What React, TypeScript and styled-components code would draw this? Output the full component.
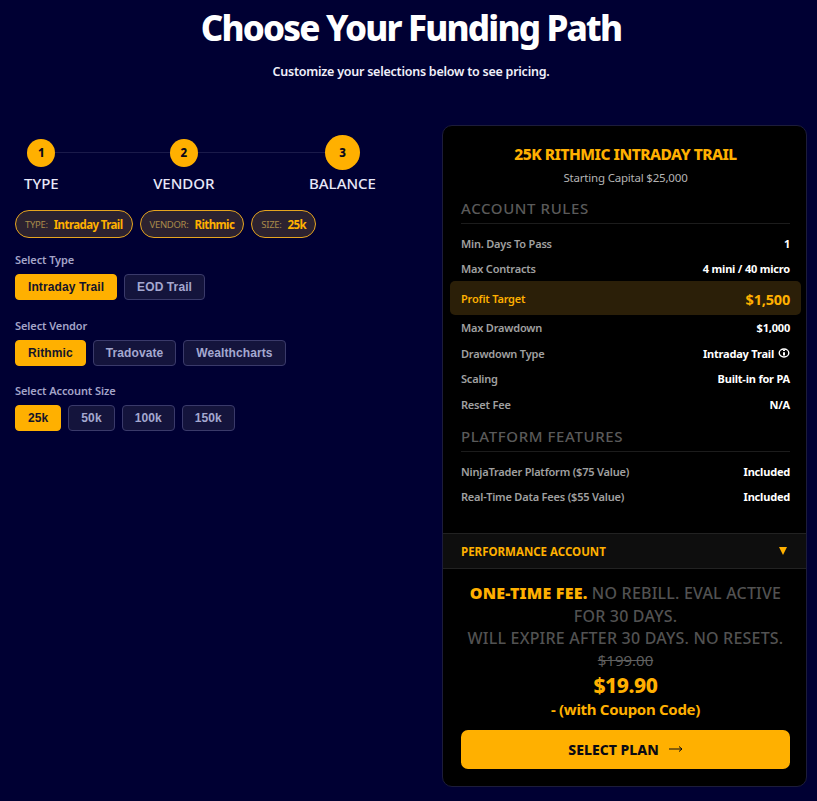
import React from 'react'
import styled, { createGlobalStyle } from 'styled-components'

const GlobalStyle = createGlobalStyle`
  html, body {
    margin: 0;
    padding: 0;
    background: #000033;
  }
  * {
    box-sizing: border-box;
  }
`

const Page = styled.div`
  width: 817px;
  height: 801px;
  overflow: hidden;
  background: #000033;
  color: #fff;
  font-family: 'Noto Sans', 'Open Sans', sans-serif;
`

const Header = styled.header`
  text-align: center;
  padding: 3px 0 0 5px;
  height: 125px;
`

const Title = styled.h1`
  margin: 0;
  font-size: 35px;
  line-height: 49px;
  font-weight: 800;
  letter-spacing: -1.8px;
`

const Subtitle = styled.p`
  margin: 11px 0 0;
  font-size: 12.5px;
  line-height: 18px;
  font-weight: 600;
  letter-spacing: -0.24px;
  color: #f0f0fa;
`

const Columns = styled.div`
  display: flex;
  justify-content: space-between;
  padding: 0 10px 0 15px;
`

const Left = styled.div`
  width: 370px;
`

const Steps = styled.div`
  position: relative;
  display: flex;
  justify-content: space-between;
  padding: 10px 9px 0;
  height: 70px;
`

const StepLine = styled.div`
  position: absolute;
  left: 40px;
  right: 60px;
  top: 27px;
  height: 1px;
  background: #1a1a4a;
`

const Step = styled.div`
  position: relative;
  display: flex;
  flex-direction: column;
  align-items: center;
`

const StepCircleSlot = styled.div`
  height: 35px;
  display: flex;
  align-items: center;
`

const StepCircle = styled.div<{ $active?: boolean }>`
  width: ${(p) => (p.$active ? 35 : 28)}px;
  height: ${(p) => (p.$active ? 35 : 28)}px;
  border-radius: 50%;
  background: #ffb000;
  color: #0a0a1a;
  font-size: 11.5px;
  font-weight: 800;
  display: flex;
  align-items: center;
  justify-content: center;
`

const StepLabel = styled.div`
  margin-top: 4px;
  font-size: 15px;
  line-height: 19px;
  font-weight: 500;
  color: #e8e8f8;
`

const Chips = styled.div`
  display: flex;
  gap: 7px;
  margin-top: 15px;
`

const Chip = styled.div`
  height: 28px;
  padding: 0 9px;
  display: flex;
  align-items: center;
  gap: 6px;
  border: 1px solid #e6a520;
  border-radius: 15px;
  background: #2c2230;
`

const ChipKey = styled.span`
  font-size: 9.5px;
  color: #a98a4a;
  letter-spacing: -0.3px;
`

const ChipValue = styled.span`
  font-size: 11.5px;
  font-weight: 700;
  color: #ffb000;
  letter-spacing: -0.6px;
`

const Group = styled.section`
  margin-top: 14px;
  & + & {
    margin-top: 17.5px;
  }
`

const GroupLabel = styled.div`
  font-size: 11px;
  line-height: 15px;
  font-weight: 600;
  color: #a4a4c8;
  letter-spacing: -0.1px;
  margin-bottom: 7px;
`

const Options = styled.div`
  display: flex;
  gap: 7px;
`

const Option = styled.button<{ $selected?: boolean }>`
  height: 26px;
  padding: 0 12px;
  border-radius: 4px;
  font-family: 'Liberation Sans', Arial, sans-serif;
  font-size: 12px;
  font-weight: 700;
  letter-spacing: 0.1px;
  border: 1px solid ${(p) => (p.$selected ? '#ffb000' : '#3a3a6a')};
  background: ${(p) => (p.$selected ? '#ffb000' : '#14143c')};
  color: ${(p) => (p.$selected ? '#14142a' : '#a4a8d0')};
`

const Card = styled.aside`
  width: 365px;
  height: 662px;
  background: #000;
  border: 1px solid #1c1c3a;
  border-radius: 10px;
  overflow: hidden;
  display: flex;
  flex-direction: column;
`

const CardBody = styled.div`
  padding: 18px 16px 0 18px;
  height: 407px;
`

const PlanTitle = styled.h2`
  margin: 0;
  text-align: center;
  font-size: 15.5px;
  line-height: 20px;
  font-weight: 800;
  letter-spacing: -0.5px;
  color: #ffb000;
`

const PlanSub = styled.div`
  text-align: center;
  margin-top: 6px;
  font-size: 11.5px;
  line-height: 15px;
  color: #b4b4b4;
  letter-spacing: -0.2px;
`

const SectionTitle = styled.h3`
  margin: 0;
  padding-bottom: 5px;
  font-size: 15px;
  line-height: 19px;
  font-weight: 500;
  letter-spacing: 0.6px;
  color: #5a5a5a;
  border-bottom: 1px solid #1c1c1c;
`

const RulesHead = styled(SectionTitle)`
  margin-top: 14px;
`

const FeaturesHead = styled(SectionTitle)`
  margin-top: 11px;
`

const Rows = styled.div`
  margin-top: 6px;
`

const Row = styled.div`
  display: flex;
  justify-content: space-between;
  align-items: center;
  height: 25.4px;
  padding-top: 1px;
`

const HighlightRow = styled(Row)`
  height: 34px;
  margin: 0 -11px;
  padding: 2px 11px 0;
  border-radius: 5px;
  background: #2b1f08;
`

const RowKey = styled.span`
  font-size: 11px;
  font-weight: 600;
  color: #a0a0a0;
  letter-spacing: -0.2px;
`

const RowValue = styled.span`
  display: flex;
  align-items: center;
  gap: 4px;
  font-size: 11px;
  font-weight: 700;
  color: #fff;
  letter-spacing: -0.2px;
`

const TargetKey = styled(RowKey)`
  color: #ffb000;
`

const TargetValue = styled.span`
  font-size: 14.5px;
  font-weight: 700;
  color: #ffb000;
  letter-spacing: -0.2px;
`

const Accordion = styled.div`
  height: 36px;
  padding: 0 19px 0 18px;
  display: flex;
  align-items: center;
  justify-content: space-between;
  background: #0e0e0e;
  border-top: 1px solid #222;
  border-bottom: 1px solid #222;
`

const AccordionLabel = styled.span`
  font-size: 11.5px;
  font-weight: 700;
  color: #ffb000;
`

const Footer = styled.div`
  padding: 13px 16px 0 18px;
  text-align: center;
`

const Notice = styled.p`
  margin: 0;
  font-size: 16px;
  line-height: 22.5px;
  font-weight: 500;
  letter-spacing: 0.2px;
  color: #525252;
`

const NoticeStrong = styled.strong`
  font-weight: 900;
  color: #ffb000;
`

const OldPrice = styled.div`
  margin-top: 1px;
  font-size: 15px;
  line-height: 18px;
  color: #5f5f5f;
  text-decoration: line-through;
`

const Price = styled.div`
  margin-top: 3px;
  font-size: 21px;
  line-height: 27px;
  font-weight: 800;
  letter-spacing: -0.4px;
  color: #ffb000;
`

const Coupon = styled.div`
  margin-top: 1px;
  font-size: 15px;
  line-height: 19px;
  font-weight: 700;
  letter-spacing: -0.3px;
  color: #ffb000;
`

const SelectButton = styled.button`
  width: 100%;
  height: 39px;
  margin-top: 11px;
  border: none;
  border-radius: 7px;
  background: #ffb000;
  color: #0a0a14;
  font-family: inherit;
  font-size: 14px;
  font-weight: 800;
  display: flex;
  align-items: center;
  justify-content: center;
  gap: 10px;
`

const InfoIcon = () => (
  <svg width="12" height="10" viewBox="0 0 12 10" fill="none" stroke="#fff">
    <ellipse cx="6" cy="5" rx="4.8" ry="4" strokeWidth="1.4" />
    <path d="M6 4.2v3.4M6 1.8v1.3" strokeWidth="2" />
  </svg>
)

const ArrowIcon = () => (
  <svg width="14" height="8" viewBox="0 0 14 8" fill="none" stroke="#0a0a14" strokeWidth="1">
    <path d="M0 4h13M10 1.5 13 4l-3 2.5" />
  </svg>
)

const TriangleIcon = () => (
  <svg width="8" height="8" viewBox="0 0 8 8" fill="#ffb000">
    <path d="M0 0h8L4 8z" />
  </svg>
)

const steps = [
  { n: 1, label: 'TYPE' },
  { n: 2, label: 'VENDOR' },
  { n: 3, label: 'BALANCE', active: true },
]

const chips = [
  { key: 'TYPE:', value: 'Intraday Trail' },
  { key: 'VENDOR:', value: 'Rithmic' },
  { key: 'SIZE:', value: '25k' },
]

const groups = [
  { label: 'Select Type', options: ['Intraday Trail', 'EOD Trail'] },
  { label: 'Select Vendor', options: ['Rithmic', 'Tradovate', 'Wealthcharts'] },
  { label: 'Select Account Size', options: ['25k', '50k', '100k', '150k'] },
]

const App = () => (
  <Page>
    <GlobalStyle />
    <Header>
      <Title>Choose Your Funding Path</Title>
      <Subtitle>Customize your selections below to see pricing.</Subtitle>
    </Header>
    <Columns>
      <Left>
        <Steps>
          <StepLine />
          {steps.map((s) => (
            <Step key={s.n}>
              <StepCircleSlot>
                <StepCircle $active={s.active}>{s.n}</StepCircle>
              </StepCircleSlot>
              <StepLabel>{s.label}</StepLabel>
            </Step>
          ))}
        </Steps>
        <Chips>
          {chips.map((c) => (
            <Chip key={c.key}>
              <ChipKey>{c.key}</ChipKey>
              <ChipValue>{c.value}</ChipValue>
            </Chip>
          ))}
        </Chips>
        {groups.map((g) => (
          <Group key={g.label}>
            <GroupLabel>{g.label}</GroupLabel>
            <Options>
              {g.options.map((o, i) => (
                <Option key={o} $selected={i === 0}>
                  {o}
                </Option>
              ))}
            </Options>
          </Group>
        ))}
      </Left>
      <Card>
        <CardBody>
          <PlanTitle>25K RITHMIC INTRADAY TRAIL</PlanTitle>
          <PlanSub>Starting Capital $25,000</PlanSub>
          <RulesHead>ACCOUNT RULES</RulesHead>
          <Rows>
            <Row>
              <RowKey>Min. Days To Pass</RowKey>
              <RowValue>1</RowValue>
            </Row>
            <Row>
              <RowKey>Max Contracts</RowKey>
              <RowValue>4 mini / 40 micro</RowValue>
            </Row>
            <HighlightRow>
              <TargetKey>Profit Target</TargetKey>
              <TargetValue>$1,500</TargetValue>
            </HighlightRow>
            <Row>
              <RowKey>Max Drawdown</RowKey>
              <RowValue>$1,000</RowValue>
            </Row>
            <Row>
              <RowKey>Drawdown Type</RowKey>
              <RowValue>
                Intraday Trail <InfoIcon />
              </RowValue>
            </Row>
            <Row>
              <RowKey>Scaling</RowKey>
              <RowValue>Built-in for PA</RowValue>
            </Row>
            <Row>
              <RowKey>Reset Fee</RowKey>
              <RowValue>N/A</RowValue>
            </Row>
          </Rows>
          <FeaturesHead>PLATFORM FEATURES</FeaturesHead>
          <Rows>
            <Row>
              <RowKey>NinjaTrader Platform ($75 Value)</RowKey>
              <RowValue>Included</RowValue>
            </Row>
            <Row>
              <RowKey>Real-Time Data Fees ($55 Value)</RowKey>
              <RowValue>Included</RowValue>
            </Row>
          </Rows>
        </CardBody>
        <Accordion>
          <AccordionLabel>PERFORMANCE ACCOUNT</AccordionLabel>
          <TriangleIcon />
        </Accordion>
        <Footer>
          <Notice>
            <NoticeStrong>ONE-TIME FEE.</NoticeStrong> NO REBILL. EVAL ACTIVE FOR 30 DAYS.
            <br />
            WILL EXPIRE AFTER 30 DAYS. NO RESETS.
          </Notice>
          <OldPrice>$199.00</OldPrice>
          <Price>$19.90</Price>
          <Coupon>- (with Coupon Code)</Coupon>
          <SelectButton>
            SELECT PLAN <ArrowIcon />
          </SelectButton>
        </Footer>
      </Card>
    </Columns>
  </Page>
)

export default App
